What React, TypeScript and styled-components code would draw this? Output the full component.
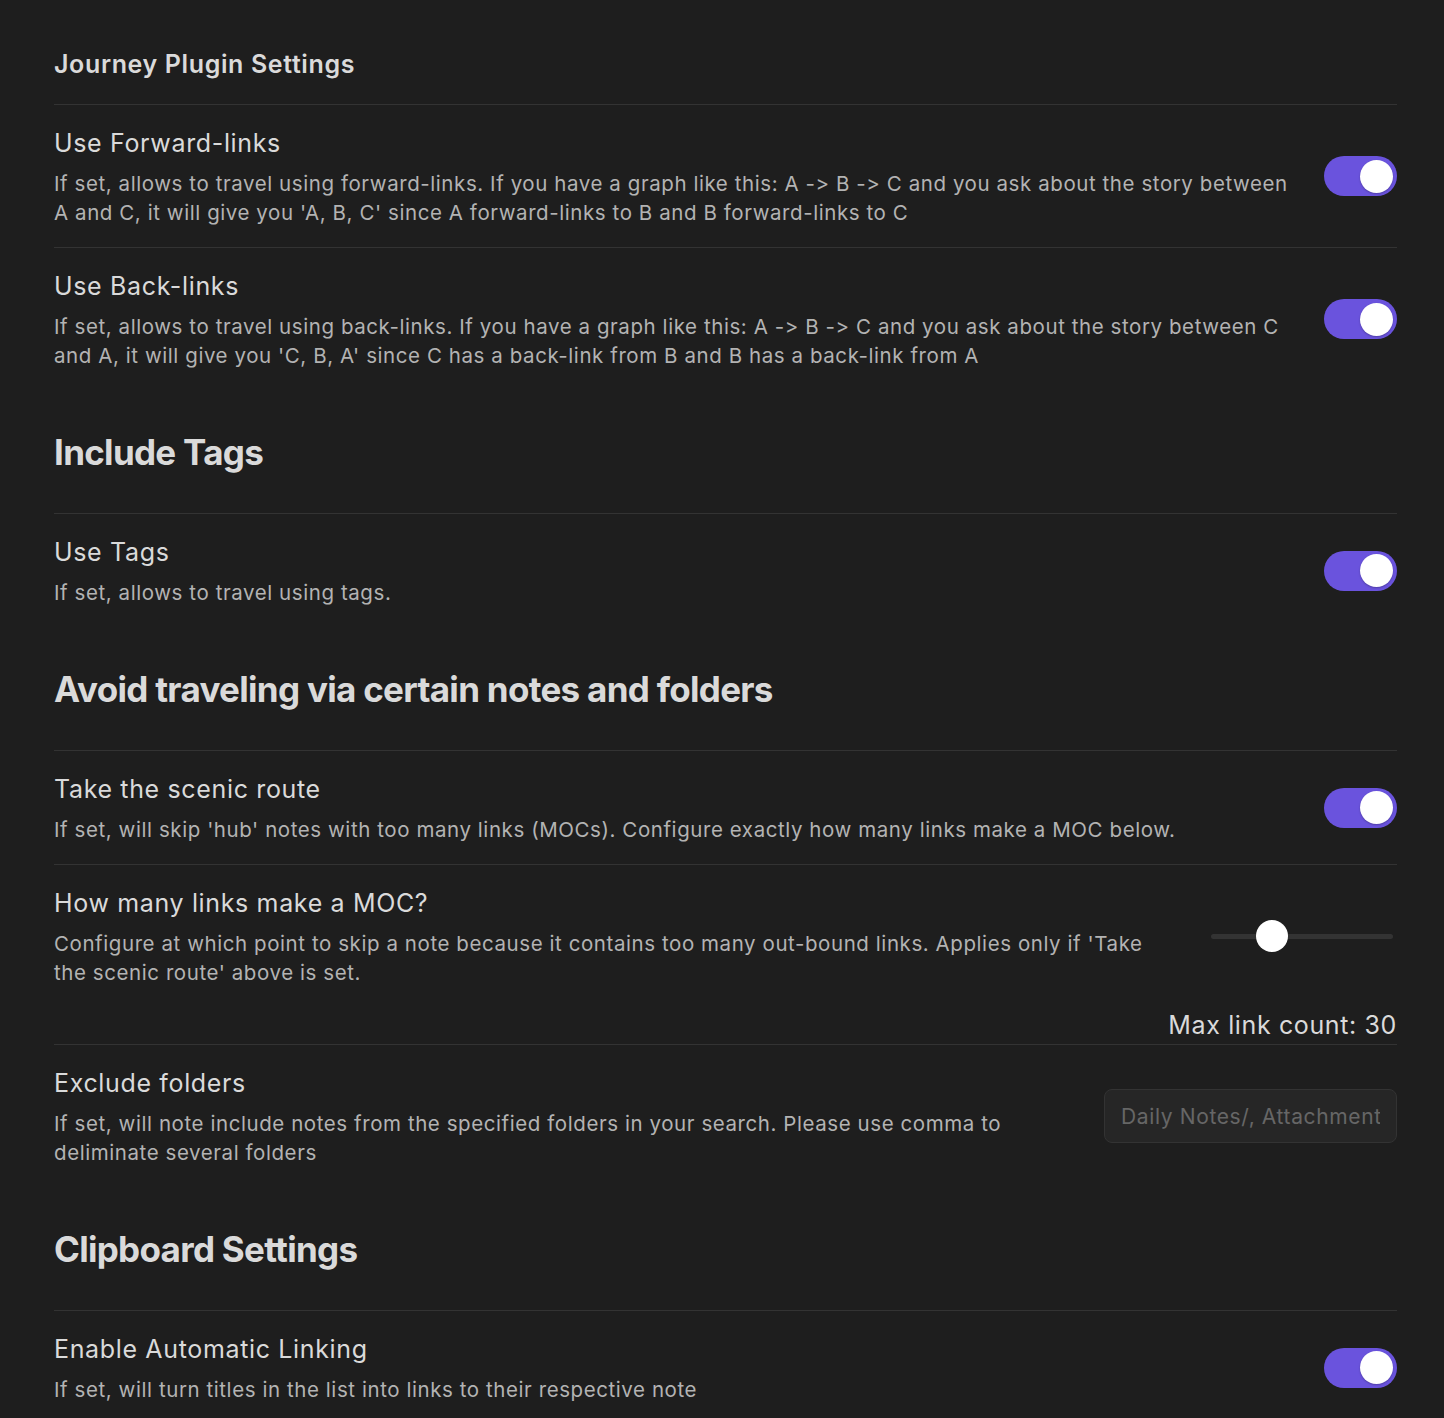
import React, { useState } from "react";
import styled, { createGlobalStyle } from "styled-components";

const Global = createGlobalStyle`
  html, body { margin: 0; padding: 0; background: #1e1e1e; }
  body {
    font-family: Inter, "Noto Sans", sans-serif;
    color: #dadada;
    -webkit-font-smoothing: antialiased;
    font-feature-settings: "calt" 0, "liga" 0;
  }
  * { box-sizing: border-box; }
`;

const Page = styled.div`
  background: #1e1e1e;
  min-height: 1418px;
  padding: 0 47px 0 54px;
  font-feature-settings: "calt" 0, "liga" 0;
`;

const PageTitle = styled.div`
  height: 104px;
  padding-top: 40px;
  font-size: 25px;
  line-height: 48px;
  font-weight: 600;
  color: #dadada;
  letter-spacing: 0.025em;
`;

const SectionHeading = styled.div`
  padding: 39px 0 38px;
  font-size: 35px;
  line-height: 46px;
  font-weight: 700;
  letter-spacing: -0.02em;
  color: #dadada;
`;

const Item = styled.div`
  display: flex;
  align-items: center;
  border-top: 1px solid #333333;
  padding: 20px 0;
`;

const Info = styled.div`
  flex: 1 1 auto;
  min-width: 0;
  margin-right: 25px;
`;

const Name = styled.div`
  font-size: 25px;
  line-height: 36px;
  color: #dadada;
  letter-spacing: 0.026em;
`;

const Desc = styled.div`
  margin-top: 8px;
  font-size: 20.5px;
  line-height: 29px;
  color: #b3b3b3;
  letter-spacing: 0.028em;
`;

const Control = styled.div<{ $width?: number }>`
  flex: 0 0 ${(p) => (p.$width ? `${p.$width}px` : "auto")};
  display: flex;
  justify-content: flex-end;
  align-items: center;
`;

const ToggleTrack = styled.button<{ $on: boolean }>`
  position: relative;
  width: 73px;
  height: 40px;
  border-radius: 20px;
  border: none;
  padding: 0;
  cursor: pointer;
  background: ${(p) => (p.$on ? "#6a53dd" : "#3f3f3f")};
`;

const Knob = styled.span<{ $on: boolean }>`
  position: absolute;
  top: 3.5px;
  left: ${(p) => (p.$on ? "36px" : "4px")};
  width: 33px;
  height: 33px;
  border-radius: 50%;
  background: #ffffff;
  box-shadow: 0 1px 2px rgba(0, 0, 0, 0.25);
`;

const SliderWrap = styled.div`
  position: relative;
  width: 182px;
  height: 32px;
  margin-right: 4px;
  display: flex;
  align-items: center;
`;

const SliderTrack = styled.div`
  width: 100%;
  height: 5px;
  border-radius: 3px;
  background: #333333;
`;

const SliderThumb = styled.div`
  position: absolute;
  top: 0;
  width: 32px;
  height: 32px;
  border-radius: 50%;
  background: #ffffff;
`;

const ValueLabel = styled.div`
  text-align: right;
  font-size: 25px;
  line-height: 36px;
  color: #dadada;
  letter-spacing: 0.025em;
  padding-bottom: 1px;
`;

const TextInput = styled.input`
  width: 293px;
  height: 54px;
  border-radius: 8px;
  border: 1px solid #333333;
  background: #262626;
  padding: 0 16px;
  font-family: Inter, "Noto Sans", sans-serif;
  font-size: 21px;
  letter-spacing: 0.03em;
  color: #dadada;
  outline: none;
  &::placeholder { color: #666666; }
`;

function Toggle({ initial = true }: { initial?: boolean }) {
  const [on, setOn] = useState(initial);
  return (
    <ToggleTrack $on={on} onClick={() => setOn(!on)} aria-pressed={on}>
      <Knob $on={on} />
    </ToggleTrack>
  );
}

function Slider({ value, min, max }: { value: number; min: number; max: number }) {
  const frac = (value - min) / (max - min);
  return (
    <SliderWrap>
      <SliderTrack />
      <SliderThumb style={{ left: `${frac * (182 - 32)}px` }} />
    </SliderWrap>
  );
}

type ToggleRowProps = { name: string; desc: string };
function ToggleRow({ name, desc }: ToggleRowProps) {
  return (
    <Item>
      <Info>
        <Name>{name}</Name>
        <Desc>{desc}</Desc>
      </Info>
      <Control>
        <Toggle />
      </Control>
    </Item>
  );
}

export default function App() {
  return (
    <Page>
      <Global />
      <PageTitle>Journey Plugin Settings</PageTitle>
      <ToggleRow
        name="Use Forward-links"
        desc="If set, allows to travel using forward-links. If you have a graph like this: A -> B -> C and you ask about the story between A and C, it will give you 'A, B, C' since A forward-links to B and B forward-links to C"
      />
      <ToggleRow
        name="Use Back-links"
        desc="If set, allows to travel using back-links. If you have a graph like this: A -> B -> C and you ask about the story between C and A, it will give you 'C, B, A' since C has a back-link from B and B has a back-link from A"
      />
      <SectionHeading>Include Tags</SectionHeading>
      <ToggleRow name="Use Tags" desc="If set, allows to travel using tags." />
      <SectionHeading>Avoid traveling via certain notes and folders</SectionHeading>
      <ToggleRow
        name="Take the scenic route"
        desc="If set, will skip 'hub' notes with too many links (MOCs). Configure exactly how many links make a MOC below."
      />
      <Item>
        <Info>
          <Name>How many links make a MOC?</Name>
          <Desc>
            Configure at which point to skip a note because it contains too many out-bound links. Applies only if
            'Take the scenic route' above is set.
          </Desc>
        </Info>
        <Control $width={200}>
          <Slider value={30} min={0} max={100} />
        </Control>
      </Item>
      <ValueLabel>Max link count: 30</ValueLabel>
      <Item>
        <Info>
          <Name>Exclude folders</Name>
          <Desc>
            If set, will note include notes from the specified folders in your search. Please use comma to deliminate
            several folders
          </Desc>
        </Info>
        <Control>
          <TextInput placeholder="Daily Notes/, Attachments/" />
        </Control>
      </Item>
      <SectionHeading>Clipboard Settings</SectionHeading>
      <ToggleRow
        name="Enable Automatic Linking"
        desc="If set, will turn titles in the list into links to their respective note"
      />
    </Page>
  );
}
